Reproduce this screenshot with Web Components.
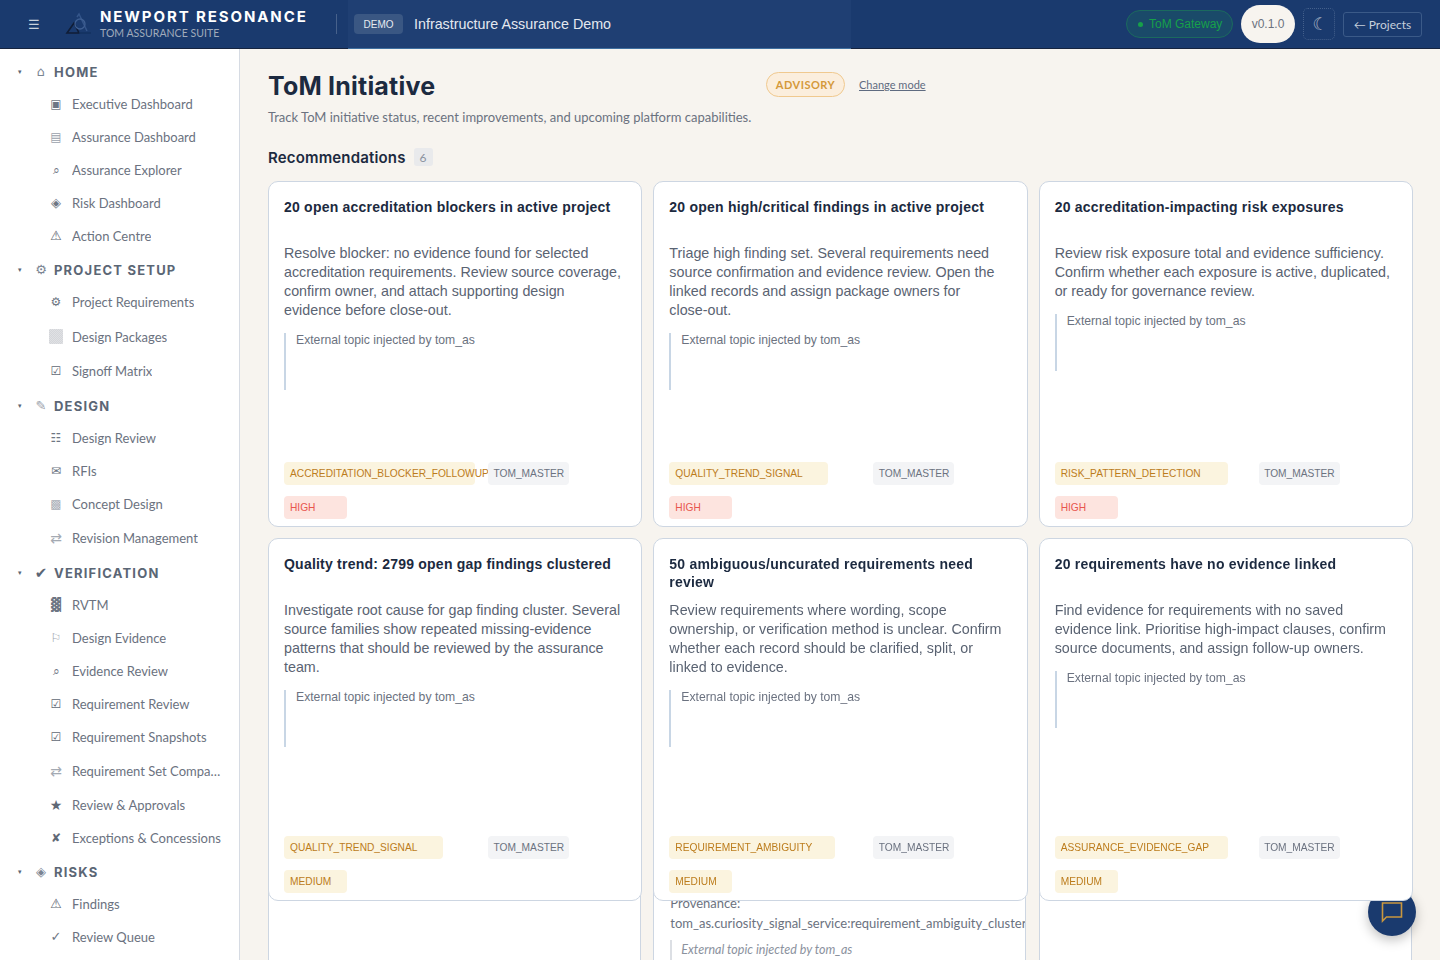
<!doctype html>
<html lang="en">
<head>
<meta charset="utf-8">
<title>ToM Initiative</title>
<style>
  html, body { margin: 0; height: 100%; overflow: hidden; background: #f7f4ef; }
  app-shell { font-family: "Lato", "Liberation Sans", sans-serif; }
  .nb { white-space: nowrap; }
</style>
</head>
<body>
<app-shell>
  <app-header slot="header"></app-header>
  <side-nav slot="nav">
    <nav-group icon="⌂" label="HOME">
      <nav-item icon="▣">Executive Dashboard</nav-item>
      <nav-item icon="▤" tone="#9aa1ab">Assurance Dashboard</nav-item>
      <nav-item icon="⌕">Assurance Explorer</nav-item>
      <nav-item icon="◈" size="13">Risk Dashboard</nav-item>
      <nav-item icon="⚠" size="13" tone="#5f6875">Action Centre</nav-item>
    </nav-group>
    <nav-group icon="⚙" label="PROJECT SETUP">
      <nav-item icon="⚙" h="34">Project Requirements</nav-item>
      <nav-item swatch h="35">Design Packages</nav-item>
      <nav-item icon="☑" h="34" tone="#5f6875">Signoff Matrix</nav-item>
    </nav-group>
    <nav-group icon="✎" label="DESIGN" tone="#9aa1ab">
      <nav-item icon="☷">Design Review</nav-item>
      <nav-item icon="✉">RFIs</nav-item>
      <nav-item icon="▩" tone="#a9aeb6">Concept Design</nav-item>
      <nav-item icon="⇄" h="35" size="14" tone="#a4aab3">Revision Management</nav-item>
    </nav-group>
    <nav-group icon="✔" label="VERIFICATION" size="15" tone="#5b6675">
      <nav-item icon="▓" size="13">RVTM</nav-item>
      <nav-item icon="⚐" tone="#9aa1ab">Design Evidence</nav-item>
      <nav-item icon="⌕">Evidence Review</nav-item>
      <nav-item icon="☑" tone="#5f6875">Requirement Review</nav-item>
      <nav-item icon="☑" tone="#5f6875">Requirement Snapshots</nav-item>
      <nav-item icon="⇄" h="35" size="14" tone="#a4aab3">Requirement Set Comparison</nav-item>
      <nav-item icon="★" size="14" tone="#5f6875">Review &amp; Approvals</nav-item>
      <nav-item icon="✘" tone="#5f6875">Exceptions &amp; Concessions</nav-item>
    </nav-group>
    <nav-group icon="◈" label="RISKS">
      <nav-item icon="⚠" size="13" tone="#5f6875">Findings</nav-item>
      <nav-item icon="✓" size="13">Review Queue</nav-item>
    </nav-group>
  </side-nav>
  <page-head></page-head>
  <section-title count="6">Recommendations</section-title>
  <card-grid>
    <rec-card heading="20 open accreditation blockers in active project" kind="ACCREDITATION_BLOCKER_FOLLOWUP" kind-width="191" level="HIGH">
      Resolve blocker: no evidence found for selected accreditation requirements. Review source coverage, confirm owner, and attach supporting design evidence before <span class="nb">close-out.</span>
    </rec-card>
    <rec-card heading="20 open high/critical findings in active project" kind="QUALITY_TREND_SIGNAL" kind-width="159" level="HIGH">
      Triage high finding set. Several requirements need source confirmation and evidence review. Open the linked records and assign package owners for <span class="nb">close-out.</span>
    </rec-card>
    <rec-card heading="20 accreditation-impacting risk exposures" kind="RISK_PATTERN_DETECTION" kind-width="173" level="HIGH">
      Review risk exposure total and evidence sufficiency. Confirm whether each exposure is active, duplicated, or ready for governance review.
    </rec-card>
    <rec-card heading="Quality trend: 2799 open gap findings clustered" kind="QUALITY_TREND_SIGNAL" kind-width="159" level="MEDIUM">
      Investigate root cause for gap finding cluster. Several source families show repeated missing-evidence patterns that should be reviewed by the assurance team.
    </rec-card>
    <rec-card heading="50 ambiguous/uncurated requirements need review" kind="REQUIREMENT_AMBIGUITY" kind-width="166" level="MEDIUM">
      Review requirements where wording, scope ownership, or verification method is unclear. Confirm whether each record should be clarified, split, or linked to evidence.
    </rec-card>
    <rec-card heading="20 requirements have no evidence linked" kind="ASSURANCE_EVIDENCE_GAP" kind-width="173" level="MEDIUM">
      Find evidence for requirements with no saved evidence link. Prioritise high-impact clauses, confirm source documents, and assign follow-up owners.
    </rec-card>
    <under-card></under-card>
    <under-card>
      <div>Provenance:</div>
      <div>tom_as.curiosity_signal_service:requirement_ambiguity_cluster</div>
      <em>External topic injected by tom_as</em>
    </under-card>
    <under-card></under-card>
  </card-grid>
  <chat-fab></chat-fab>
</app-shell>

<script>
// small helper so every element gets an open shadow root with its own styles
function shadow(el, html) {
  el.attachShadow({ mode: 'open' }).innerHTML = html;
}

class AppShell extends HTMLElement {
  constructor() {
    super();
    shadow(this, /* html */ `
    <style>
      :host {
        display: grid;
        grid-template: 49px 1fr / 240px 1fr;
        width: 1440px;
        height: 960px;
        overflow: hidden;
      }
      .head { grid-column: 1 / 3; }
      .main {
        position: relative;
        padding: 20px 27px 0 28px;
        overflow: hidden;
      }
    </style>
    <div class="head"><slot name="header"></slot></div>
    <slot name="nav"></slot>
    <div class="main"><slot></slot></div>
    `);
  }
}

class AppHeader extends HTMLElement {
  constructor() {
    super();
    shadow(this, /* html */ `
    <style>
      :host {
        display: flex;
        align-items: center;
        box-sizing: border-box;
        height: 49px;
        background: #1a3a6e;
        border-bottom: 1px solid #16243f;
        color: #fff;
      }
      .burger { width: 14px; margin: 0 22px 0 28px; color: #c9d1dc; font: 13px "DejaVu Sans", sans-serif; }
      svg.logo { width: 28px; height: 30px; margin-right: 8px; flex: none; }
      .brand { width: 236px; flex: none; }
      .name { font: 700 15px/17px Inter, sans-serif; letter-spacing: 1.9px; white-space: nowrap; }
      .suite { font: 400 10.5px/13px Lato, sans-serif; color: #a0abbb; margin-top: 2px; letter-spacing: .03px; }
      .rule { width: 1px; height: 20px; background: rgba(255,255,255,.2); flex: none; }
      .mid {
        display: flex;
        align-items: center;
        gap: 11px;
        box-sizing: border-box;
        width: 503px;
        height: 49px;
        margin-left: 11px;
        margin-bottom: -1px;
        padding-left: 6px;
        background: #1f3f73;
        border-bottom: 1px solid #3f6f9f;
        flex: none;
      }
      .demo {
        box-sizing: border-box;
        width: 49px;
        height: 20px;
        text-align: center;
        border-radius: 4px;
        background: #3a5783;
        color: #e6eaf0;
        font: 10px/21px "Liberation Sans", sans-serif;
      }
      .proj { font: 14.3px "Liberation Sans", sans-serif; color: #e4e8ef; }
      .right { display: flex; align-items: center; gap: 8px; margin-left: auto; padding-right: 18px; }
      .gw {
        display: flex; align-items: center; gap: 6px;
        box-sizing: border-box;
        width: 107px; height: 28px; padding-left: 11px;
        border: 1px solid #1b6a5e; border-radius: 14px;
        background: #1a4a69; color: #17a049;
        font: 12px "Liberation Sans", sans-serif;
      }
      .gw i { width: 5px; height: 5px; border-radius: 50%; background: #17a049; }
      .ver {
        width: 54px; height: 38px; border-radius: 19px;
        display: flex; align-items: center; justify-content: center;
        background: #f7f4ef; color: #6b7280;
        font: 12px "Liberation Sans", sans-serif;
      }
      .moon {
        box-sizing: border-box;
        width: 32px; height: 32px; border-radius: 5px;
        display: flex; align-items: center; justify-content: center;
        padding-left: 2px;
        border: 1px dotted #44608c; color: #a8b3c4;
        font: 17px "DejaVu Sans", sans-serif;
      }
      .back {
        box-sizing: border-box;
        width: 79px; height: 25px; border-radius: 3px;
        display: flex; align-items: center; justify-content: center; gap: 3px;
        border: 1px solid #3b5a88; color: #c7d0dc;
        font: 12px Lato, sans-serif;
      }
    </style>
    <span class="burger">☰</span>
    <svg class="logo" viewBox="0 0 28 30" fill="none">
      <path d="M3 24 L10 14 L15 24 Z" stroke="#101d36" stroke-width="1.6"/>
      <path d="M13 8 L15 5 L23 22" stroke="#34558a" stroke-width="1.5"/>
      <circle cx="16" cy="15" r="5" stroke="#3f5f92" stroke-width="1.3"/>
      <path d="M15 24 H27" stroke="#14315f" stroke-width="1.4"/>
    </svg>
    <div class="brand">
      <div class="name">NEWPORT RESONANCE</div>
      <div class="suite">TOM ASSURANCE SUITE</div>
    </div>
    <span class="rule"></span>
    <div class="mid"><span class="demo">DEMO</span><span class="proj">Infrastructure Assurance Demo</span></div>
    <div class="right">
      <div class="gw"><i></i>ToM Gateway</div>
      <div class="ver">v0.1.0</div>
      <div class="moon">☾</div>
      <div class="back"><span>←</span><span>Projects</span></div>
    </div>
    `);
  }
}

class SideNav extends HTMLElement {
  constructor() {
    super();
    shadow(this, /* html */ `
    <style>
      :host {
        display: flex;
        flex-direction: column;
        gap: 2px;
        box-sizing: border-box;
        width: 240px;
        padding-top: 7px;
        background: #fff;
        border-right: 1px solid #d6dbe3;
        overflow: hidden;
      }
    </style>
    <slot></slot>
    `);
  }
}

class NavGroup extends HTMLElement {
  constructor() {
    super();
    const size = this.getAttribute('size') || 13;
    const tone = this.getAttribute('tone') || '#7a8492';
    shadow(this, /* html */ `
    <style>
      :host { display: block; }
      .head { display: flex; align-items: center; height: 31px; color: #5b6675; }
      .caret { width: 8px; margin-left: 18px; font: 7px "DejaVu Sans", sans-serif; }
      .icon { width: 16px; margin-left: 7px; text-align: center; font: ${size}px/16px "DejaVu Sans", sans-serif; color: ${tone}; }
      .label { margin-left: 5px; font: 700 13px Inter, sans-serif; letter-spacing: 1.2px; }
    </style>
    <div class="head">
      <span class="caret">▾</span>
      <span class="icon">${this.getAttribute('icon')}</span>
      <span class="label">${this.getAttribute('label')}</span>
    </div>
    <slot></slot>
    `);
  }
}

class NavItem extends HTMLElement {
  constructor() {
    super();
    const h = this.getAttribute('h') || 33;
    const size = this.getAttribute('size') || 12;
    const tone = this.getAttribute('tone') || '#6d7683';
    const icon = this.hasAttribute('swatch') ? '<i></i>' : this.getAttribute('icon');
    shadow(this, /* html */ `
    <style>
      :host {
        display: flex;
        align-items: center;
        height: ${h}px;
        color: #6b7280;
      }
      .icon {
        display: flex;
        justify-content: center;
        flex: none;
        width: 20px;
        margin-left: 46px;
        margin-right: 6px;
        font: ${size}px/20px "DejaVu Sans", sans-serif;
        color: ${tone};
      }
      i {
        width: 14px;
        height: 15px;
        border-radius: 1px;
        background: repeating-conic-gradient(#d4d6da 0 25%, #e0e1e4 0 50%) 0 0 / 2px 2px;
      }
      .text {
        max-width: 149px;
        overflow: hidden;
        white-space: nowrap;
        text-overflow: ellipsis;
        font: 13px Lato, sans-serif;
      }
    </style>
    <span class="icon">${icon}</span>
    <span class="text"><slot></slot></span>
    `);
  }
}

class PageHead extends HTMLElement {
  constructor() {
    super();
    shadow(this, /* html */ `
    <style>
      :host { display: block; }
      .row { display: flex; align-items: center; height: 34px; }
      h1 { margin: 0; width: 498px; font: 700 25px Inter, sans-serif; color: #1c2a40; letter-spacing: .2px; }
      .pill {
        box-sizing: border-box;
        width: 79px; height: 25px; border-radius: 13px;
        margin-bottom: 3px;
        display: flex; align-items: center; justify-content: center;
        background: #fbeedd; border: 1px solid #f0c98f; color: #d4993a;
        font: 700 11px Lato, sans-serif; letter-spacing: .5px;
      }
      a { margin: 0 0 3px 14px; font: 11px Lato, sans-serif; color: #5f6b80; text-decoration: underline; }
      p { margin: 4px 0 0; font: 13px/20px Lato, sans-serif; color: #6b7280; }
    </style>
    <div class="row">
      <h1>ToM Initiative</h1>
      <span class="pill">ADVISORY</span>
      <a>Change mode</a>
    </div>
    <p>Track ToM initiative status, recent improvements, and upcoming platform capabilities.</p>
    `);
  }
}

class SectionTitle extends HTMLElement {
  constructor() {
    super();
    shadow(this, /* html */ `
    <style>
      :host { display: flex; align-items: center; gap: 8px; height: 18px; margin: 21px 0 15px; }
      .t { font: 600 15px Inter, sans-serif; color: #1c2a40; letter-spacing: .16px; }
      .n {
        width: 19px; height: 18px; border-radius: 3px; background: #e9eaec; color: #8a929e;
        display: flex; align-items: center; justify-content: center;
        font: 12px Lato, sans-serif;
      }
    </style>
    <span class="t"><slot></slot></span>
    <span class="n">${this.getAttribute('count')}</span>
    `);
  }
}

class CardGrid extends HTMLElement {
  constructor() {
    super();
    shadow(this, /* html */ `
    <style>
      :host {
        display: grid;
        grid-template-columns: repeat(3, 1fr);
        grid-template-rows: 346px 363px 200px;
        gap: 11px;
      }
    </style>
    <slot></slot>
    `);
  }
}

class RecCard extends HTMLElement {
  constructor() {
    super();
    const kindWidth = this.getAttribute('kind-width');
    const level = this.getAttribute('level');
    const high = level === 'HIGH';
    shadow(this, /* html */ `
    <style>
      :host {
        position: relative;
        z-index: 2;
        display: flex;
        flex-direction: column;
        box-sizing: border-box;
        padding: 16px 16px 7px 15px;
        background: #fff;
        border: 1px solid #cdd6e2;
        border-radius: 10px;
      }
      h3 {
        margin: 0 0 10px;
        min-height: 36px;
        font: 700 14px/18px "Liberation Sans", sans-serif;
        letter-spacing: .22px;
        color: #1c2a40;
      }
      p { margin: 0; font: 14.3px/19px "Liberation Sans", sans-serif; color: #5a6372; }
      blockquote {
        margin: 13px 0 0;
        padding-left: 10px;
        height: 57px;
        border-left: 2px solid #c8d6e5;
        font: 12.2px/14px "Liberation Sans", sans-serif;
        color: #6b7280;
      }
      .tags {
        display: grid;
        grid-template-columns: 204px auto;
        row-gap: 11px;
        justify-items: start;
        margin-top: auto;
      }
      .tag {
        box-sizing: border-box;
        height: 23px;
        padding: 0 6px;
        border-radius: 4px;
        font: 10.2px/23px "Liberation Sans", sans-serif;
        white-space: nowrap;
      }
      .kind { width: ${kindWidth}px; background: #fbf4df; color: #bc7c1c; }
      .owner { position: relative; background: #f3f4f6; color: #6b7280; padding: 0 5px 0 5.5px; }
      .level {
        width: 63px;
        background: ${high ? '#fde4df' : '#fbf4df'};
        color: ${high ? '#e8554e' : '#bc7c1c'};
      }
    </style>
    <h3>${this.getAttribute('heading')}</h3>
    <p><slot></slot></p>
    <blockquote>External topic injected by tom_as</blockquote>
    <div class="tags">
      <span class="tag kind">${this.getAttribute('kind')}</span>
      <span class="tag owner">TOM_MASTER</span>
      <span class="tag level">${level}</span>
    </div>
    `);
  }
}

class UnderCard extends HTMLElement {
  constructor() {
    super();
    shadow(this, /* html */ `
    <style>
      :host {
        display: block;
        box-sizing: border-box;
        height: 240px;
        margin: -60px 1.5px 0 0;
        padding: 40px 0 0 16px;
        background: #fff;
        border: 1px solid #cdd6e2;
        border-radius: 10px;
        overflow: hidden;
        white-space: nowrap;
        font: 13px/20px Lato, sans-serif;
        color: #6b7280;
      }
      ::slotted(em) {
        display: block;
        margin-top: 7px;
        padding-left: 9px;
        border-left: 2px solid #dcdfe4;
        font-size: 12.5px;
        color: #8b929e;
      }
    </style>
    <slot></slot>
    `);
  }
}

class ChatFab extends HTMLElement {
  constructor() {
    super();
    shadow(this, /* html */ `
    <style>
      :host {
        position: fixed;
        right: 24px;
        bottom: 24px;
        z-index: 1;
        display: flex;
        align-items: center;
        justify-content: center;
        width: 48px;
        height: 48px;
        border-radius: 50%;
        background: #1a3a6e;
        box-shadow: 0 4px 12px rgba(0,0,0,.25);
      }
      svg { width: 24px; height: 24px; }
    </style>
    <svg viewBox="0 0 24 24" fill="none" stroke="#c9973f" stroke-width="1.6">
      <path d="M2.5 3 H21.5 V17 H6.5 L2.5 21 Z"/>
    </svg>
    `);
  }
}

customElements.define('app-shell', AppShell);
customElements.define('app-header', AppHeader);
customElements.define('side-nav', SideNav);
customElements.define('nav-group', NavGroup);
customElements.define('nav-item', NavItem);
customElements.define('page-head', PageHead);
customElements.define('section-title', SectionTitle);
customElements.define('card-grid', CardGrid);
customElements.define('rec-card', RecCard);
customElements.define('under-card', UnderCard);
customElements.define('chat-fab', ChatFab);
</script>
</body>
</html>
